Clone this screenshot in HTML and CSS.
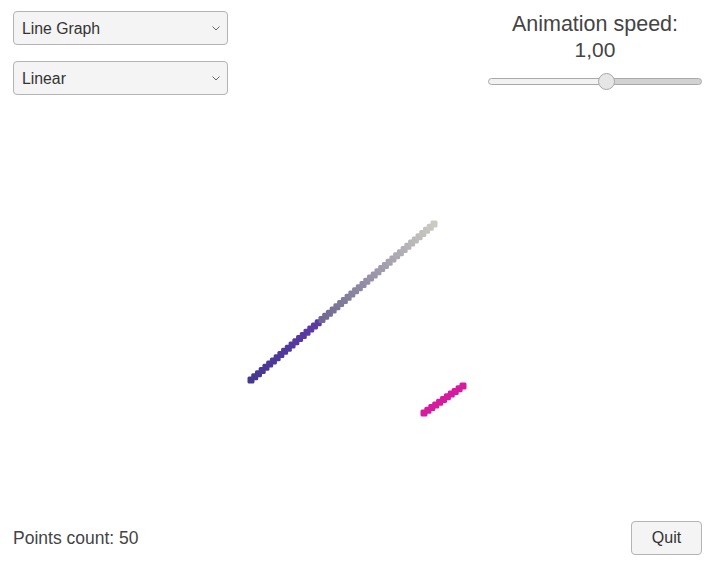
FILE: index.html
```html
<!DOCTYPE html>
<html>
<head>
<meta charset="utf-8">
<link rel="stylesheet" href="styles.css">
</head>
<body>
<div class="app">
  <svg class="plot" id="plot" viewBox="0 0 712 570" xmlns="http://www.w3.org/2000/svg"></svg>
  <div class="top">
    <div class="selects">
      <div class="select-wrap">
        <select class="select"><option>Line Graph</option></select>
        <svg class="chev" viewBox="0 0 8 5"><path d="M0.5 0.5 L4 4 L7.5 0.5" fill="none" stroke="#666" stroke-width="1"/></svg>
      </div>
      <div class="select-wrap">
        <select class="select"><option>Linear</option></select>
        <svg class="chev" viewBox="0 0 8 5"><path d="M0.5 0.5 L4 4 L7.5 0.5" fill="none" stroke="#666" stroke-width="1"/></svg>
      </div>
    </div>
    <div class="speed">
      <div class="speed-label">Animation speed:</div>
      <div class="speed-value">1,00</div>
      <input class="slider" type="range" min="0" max="2" step="0.01" value="1.12">
    </div>
  </div>
  <div class="spacer"></div>
  <div class="bottom">
    <div class="count">Points count: 50</div>
    <button class="quit">Quit</button>
  </div>
</div>
<script src="script.js"></script>
</body>
</html>
```
FILE: styles.css
```css
html, body {
  margin: 0;
  padding: 0;
  background: #ffffff;
}
.app {
  position: relative;
  width: 712px;
  height: 570px;
  display: flex;
  flex-direction: column;
  font-family: "Liberation Sans", Arial, sans-serif;
  color: #444;
  overflow: hidden;
}
.plot {
  position: absolute;
  left: 0;
  top: 0;
  width: 712px;
  height: 570px;
  pointer-events: none;
}
.top {
  display: flex;
  justify-content: space-between;
  padding: 11px 10px 0 13px;
}
.selects {
  display: flex;
  flex-direction: column;
  gap: 16px;
}
.select-wrap {
  position: relative;
  width: 215px;
  height: 34px;
}
.select {
  appearance: none;
  -webkit-appearance: none;
  width: 100%;
  height: 100%;
  box-sizing: border-box;
  border: 1px solid #b4b4b4;
  border-radius: 4px;
  background: #f4f4f4;
  font-family: "Liberation Sans", Arial, sans-serif;
  font-size: 15.8px;
  color: #333;
  padding: 0 0 0 8px;
  outline: none;
}
.chev {
  position: absolute;
  right: 8px;
  top: 15px;
  width: 8px;
  height: 5px;
}
.speed {
  width: 214px;
  display: flex;
  flex-direction: column;
  align-items: center;
}
.speed-label {
  font-size: 21.5px;
  line-height: 26px;
  color: #444;
}
.speed-value {
  font-size: 21px;
  line-height: 26px;
  color: #444;
}
.slider {
  -webkit-appearance: none;
  appearance: none;
  width: 214px;
  height: 7px;
  margin: 15px 0 0 0;
  border: 1px solid #a8a8a8;
  border-radius: 4px;
  box-sizing: border-box;
  background: linear-gradient(to right, #f2f2f2 0%, #f2f2f2 55.6%, #d2d2d2 55.6%, #d2d2d2 100%);
  outline: none;
}
.slider::-webkit-slider-thumb {
  -webkit-appearance: none;
  appearance: none;
  width: 17px;
  height: 17px;
  border-radius: 50%;
  background: #e6e6e6;
  border: 1px solid #a8a8a8;
  box-sizing: border-box;
}
.spacer {
  flex: 1;
}
.bottom {
  display: flex;
  justify-content: space-between;
  align-items: center;
  padding: 0 10px 15px 13px;
}
.count {
  font-size: 17.5px;
  color: #444;
}
.quit {
  width: 71px;
  height: 34px;
  border: 1px solid #b4b4b4;
  border-radius: 4px;
  background: #f4f4f4;
  font-family: "Liberation Sans", Arial, sans-serif;
  font-size: 16px;
  color: #333;
  padding: 0;
}
```
FILE: script.js
```js
(function () {
  var svg = document.getElementById('plot');
  var NS = 'http://www.w3.org/2000/svg';
  function lerp(a, b, t) { return a + (b - a) * t; }
  function mix(c1, c2, t) {
    return 'rgb(' + Math.round(lerp(c1[0], c2[0], t)) + ',' +
      Math.round(lerp(c1[1], c2[1], t)) + ',' +
      Math.round(lerp(c1[2], c2[2], t)) + ')';
  }
  function sq(x, y, color) {
    var r = document.createElementNS(NS, 'rect');
    r.setAttribute('x', (x - 3.5).toFixed(2));
    r.setAttribute('y', (y - 3.5).toFixed(2));
    r.setAttribute('width', 7);
    r.setAttribute('height', 7);
    r.setAttribute('rx', 1.5);
    r.setAttribute('fill', color);
    svg.appendChild(r);
  }
  var n = 50;
  var x0 = 251, y0 = 380, x1 = 434, y1 = 224;
  for (var i = 0; i < n; i++) {
    var t = i / (n - 1);
    var x = lerp(x0, x1, t), y = lerp(y0, y1, t);
    var c;
    if (i <= 18) {
      c = mix([70, 56, 142], [92, 58, 166], i / 18);
    } else {
      c = mix([112, 104, 146], [202, 202, 194], (i - 19) / (n - 20));
    }
    sq(x, y, c);
  }
  var m = 11;
  for (var j = 0; j < m; j++) {
    var tt = j / (m - 1);
    sq(lerp(424, 463, tt), lerp(413, 386, tt), 'rgb(214,28,158)');
  }
})();
```
